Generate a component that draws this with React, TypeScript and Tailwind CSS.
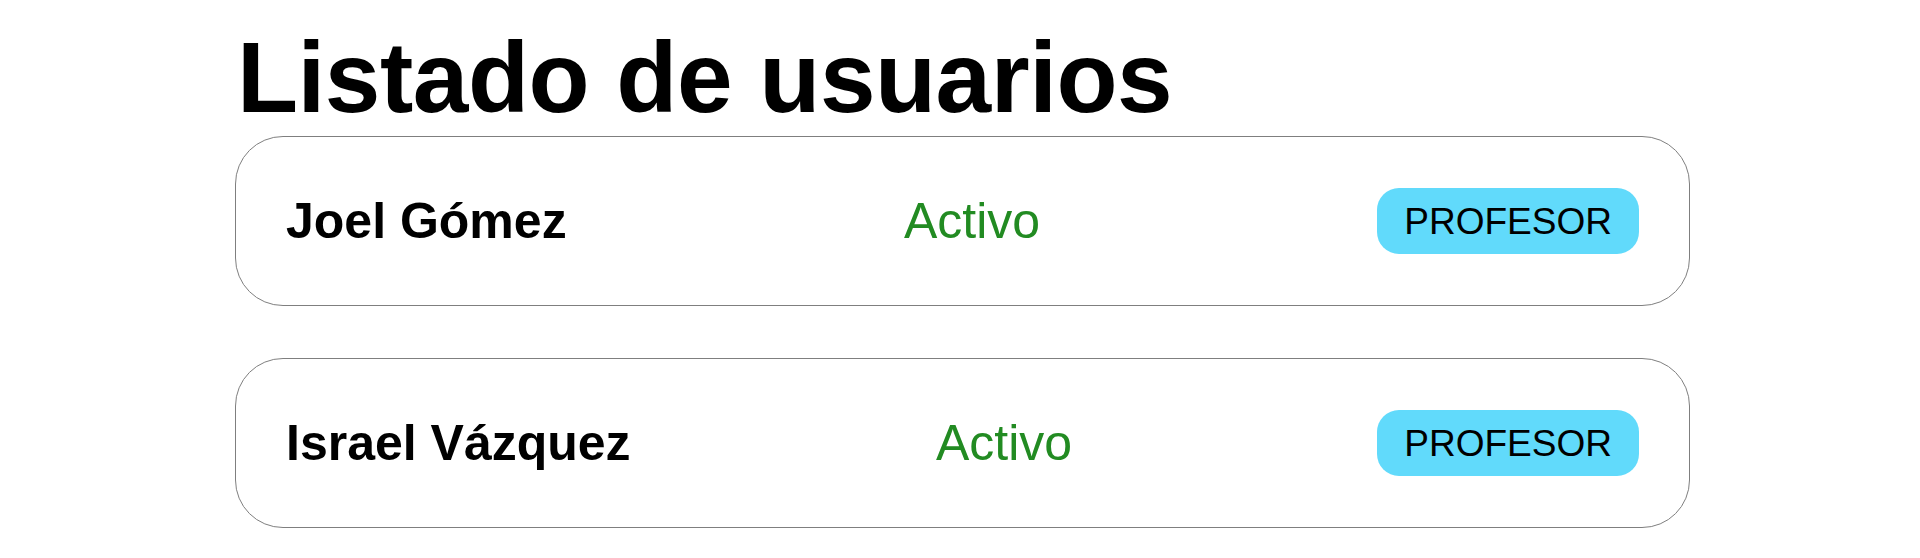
const usuarios = [
  { nombre: "Joel Gómez", estado: "Activo", rol: "PROFESOR" },
  { nombre: "Israel Vázquez", estado: "Activo", rol: "PROFESOR" },
];

function TarjetaUsuario({ nombre, estado, rol }: { nombre: string; estado: string; rol: string }) {
  return (
    <div className="flex items-center justify-between h-[170px] px-[50px] border-[1.5px] border-[#7f7f7f] rounded-[48px] bg-white">
      <span className="text-[50px] font-bold text-black leading-none">{nombre}</span>
      <span className="text-[50px] text-[#228b22] leading-none">{estado}</span>
      <span className="flex items-center h-[66px] px-[27px] rounded-[22px] bg-[#61dafb] text-[37px] text-black leading-none">
        {rol}
      </span>
    </div>
  );
}

export default function App() {
  return (
    <div className="min-h-[558px] bg-white font-['Liberation_Sans',Arial,sans-serif]">
      <div className="w-[1455px] ml-[235px] pt-[21px]">
        <h1 className="text-[100px] leading-[112px] font-bold text-black ml-[2px] tracking-[-0.5px]">
          Listado de usuarios
        </h1>
        <div className="mt-[3px] flex flex-col gap-[52px]">
          {usuarios.map((u, idx) => (
            <TarjetaUsuario key={idx} {...u} />
          ))}
        </div>
      </div>
    </div>
  );
}
